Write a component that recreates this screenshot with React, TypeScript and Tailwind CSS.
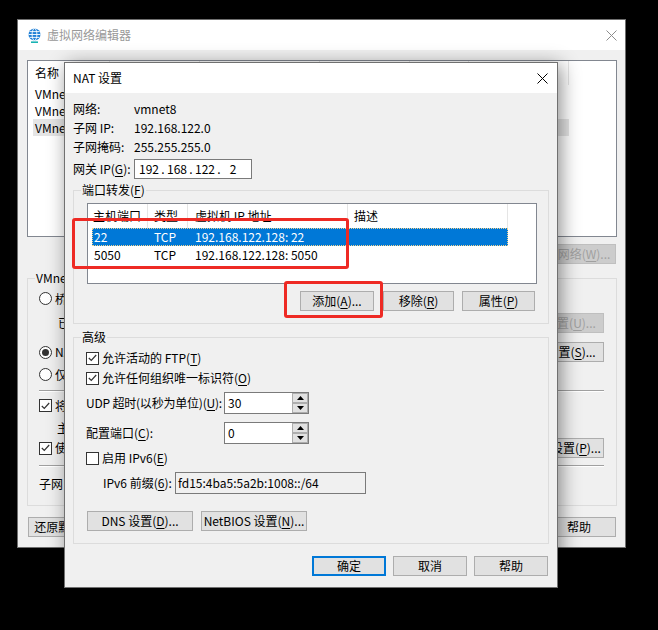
import React from 'react';

type Kids = { children?: React.ReactNode };
type Kind = 'normal' | 'primary' | 'disabled';

// access-key letter, underlined like in Win32 dialogs
function Key({ k }: { k: string }) {
  return <span className="underline decoration-1 underline-offset-2">{k}</span>;
}

function Btn({ children, className = '', kind = 'normal' }: Kids & { className?: string; kind?: Kind }) {
  const tone =
    kind === 'primary'
      ? 'border-2 border-[#0078d7] bg-[#e1e1e1] text-black'
      : kind === 'disabled'
        ? 'border border-[#bfbfbf] bg-[#cccccc] text-[#a0a0a0]'
        : 'border border-[#adadad] bg-[#e1e1e1] text-black';
  return (
    <div className={`flex h-[20px] shrink-0 items-center justify-center whitespace-nowrap leading-[14px] ${tone} ${className}`}>
      {children}
    </div>
  );
}

function Check({ on }: { on: boolean }) {
  return (
    <span className="flex h-[13px] w-[13px] shrink-0 items-center justify-center border border-[#333333] bg-white">
      {on && (
        <svg width="9" height="8" viewBox="0 0 9 8">
          <path d="M0.8 4 L3.3 6.5 L8.2 1" fill="none" stroke="#333333" strokeWidth="1.2" />
        </svg>
      )}
    </span>
  );
}

function Radio({ on }: { on: boolean }) {
  return (
    <span className="flex h-[13px] w-[13px] shrink-0 items-center justify-center rounded-full border border-[#333333] bg-white">
      {on && <span className="h-[7px] w-[7px] rounded-full bg-[#333333]" />}
    </span>
  );
}

function Spin({ value }: { value: string }) {
  return (
    <div className="flex h-[22px] w-[85px] shrink-0 border border-[#7a7a7a] bg-white">
      <div className="flex flex-1 items-center pl-[3px] leading-[14px]">{value}</div>
      <div className="flex w-[16px] flex-col">
        <div className="flex h-[10px] items-center justify-center border border-[#adadad] bg-[#e1e1e1]">
          <svg width="7" height="4" viewBox="0 0 7 4"><path d="M0 4 L3.5 0 L7 4 Z" fill="#000" /></svg>
        </div>
        <div className="flex h-[10px] items-center justify-center border border-[#adadad] bg-[#e1e1e1]">
          <svg width="7" height="4" viewBox="0 0 7 4"><path d="M0 0 L3.5 4 L7 0 Z" fill="#000" /></svg>
        </div>
      </div>
    </div>
  );
}

function Group({ label, className = '', children }: Kids & { label: React.ReactNode; className?: string }) {
  return (
    <div className={`relative border border-[#dcdcdc] ${className}`}>
      <span className="absolute -top-[8px] left-[7px] bg-[#f0f0f0] px-[1px] leading-[14px] whitespace-nowrap">{label}</span>
      {children}
    </div>
  );
}

function Separator() {
  return (
    <div className="flex flex-col">
      <div className="h-px bg-[#a0a0a0]" />
      <div className="h-px bg-white" />
    </div>
  );
}

function CloseX({ color, size }: { color: string; size: number }) {
  return (
    <svg width={size} height={size} viewBox={`0 0 ${size} ${size}`} className="shrink-0">
      <path d={`M0.5 0.5 L${size - 0.5} ${size - 0.5} M${size - 0.5} 0.5 L0.5 ${size - 0.5}`} stroke={color} strokeWidth="1" />
    </svg>
  );
}

function Globe() {
  return (
    <svg width="13" height="15" viewBox="0 0 13 15" className="shrink-0">
      <circle cx="6.5" cy="6.5" r="6" fill="#1e7fd6" />
      <ellipse cx="6.5" cy="6.5" rx="2.4" ry="6" fill="none" stroke="#ffffff" strokeWidth="0.9" />
      <path d="M0.5 6.5 H12.5 M1.6 3.6 H11.4 M1.6 9.4 H11.4" stroke="#ffffff" strokeWidth="0.9" />
      <rect x="3" y="13.4" width="7" height="1.6" fill="#19b3b3" />
    </svg>
  );
}

const backCols = [82, 90, 120, 90, 59, 100];
const backHead = ['名称', '类型', '外部连接', '主机连接', 'DHCP', '子网地址'];
const backRows = [
  ['VMnet0', '桥接模式', '自动桥接', '-', '-', '-'],
  ['VMnet1', '仅主机...', '-', '已连接', '已启用', '192.168.137.0'],
  ['VMnet8', 'NAT 模式', 'NAT 模式', '已连接', '已启用', '192.168.122.0'],
];

function BackWindow() {
  return (
    <div className="absolute left-[17px] top-[19px] flex h-[529px] w-[609px] flex-col border border-[#6f6f6f] bg-[#f0f0f0]">
      <div className="flex h-[30px] shrink-0 items-center bg-white pl-[10px] pr-[8px]">
        <Globe />
        <span className="ml-[6px] leading-[16px] whitespace-nowrap text-[#999999]">虚拟网络编辑器</span>
        <div className="ml-auto"><CloseX color="#8c8c8c" size={11} /></div>
      </div>

      <div className="flex flex-1 flex-col pl-[9px] pr-[8px] pt-[10px]">
        {/* network list */}
        <div className="flex h-[177px] flex-col border border-[#828790] bg-white">
          <div className="flex h-[24px] shrink-0">
            {backHead.map((h, i) => (
              <div key={h} style={{ width: backCols[i] }} className="flex items-center border-r border-[#e5e5e5] pl-[7px] whitespace-nowrap leading-[14px]">
                {h}
              </div>
            ))}
          </div>
          {backRows.map((r, ri) => (
            <div key={r[0]} className={`ml-[5px] flex h-[17px] w-[536px] items-center leading-[14px] ${ri === 2 ? 'bg-[#e5e5e5]' : ''}`}>
              {r.map((c, i) => (
                <div key={i} style={{ width: i === 0 ? backCols[0] - 5 : backCols[i] }} className="pl-[2px] whitespace-nowrap">
                  {c}
                </div>
              ))}
            </div>
          ))}
        </div>

        <div className="mt-[7px] mr-[1px] flex justify-end gap-[8px]">
          <Btn className="w-[100px]">添加网络(<Key k="E" />)...</Btn>
          <Btn className="w-[100px]">移除网络(<Key k="O" />)</Btn>
          <Btn kind="disabled" className="w-[100px]">重命名网络(<Key k="W" />)...</Btn>
        </div>

        <Group label="VMnet 信息" className="mt-[14px] h-[228px]">
          <div className="flex flex-col pl-[11px] pr-[12px] pt-[10px] leading-[14px] whitespace-nowrap">
            <div className="flex h-[19px] items-center">
              <Radio on={false} />
              <span className="ml-[3px]">桥接模式(将虚拟机直接连接到外部网络)(<Key k="B" />)</span>
            </div>
            <div className="mt-[5px] flex h-[20px] items-center">
              <span className="ml-[19px]">已桥接至(<Key k="G" />):</span>
              <div className="ml-[8px] h-[20px] w-[300px] border border-[#cccccc] bg-[#f0f0f0]" />
              <Btn kind="disabled" className="ml-auto w-[91px]">自动设置(<Key k="U" />)...</Btn>
            </div>
            <div className="mt-[9px] flex h-[20px] items-center">
              <Radio on />
              <span className="ml-[3px]">NAT 模式(与虚拟机共享主机的 IP 地址)(<Key k="N" />)</span>
              <Btn className="ml-auto w-[91px]">NAT 设置(<Key k="S" />)...</Btn>
            </div>
            <div className="mt-[3px] flex h-[19px] items-center">
              <Radio on={false} />
              <span className="ml-[3px]">仅主机模式(在专用网络内连接虚拟机)(<Key k="H" />)</span>
            </div>
            <div className="mt-[6px]"><Separator /></div>
            <div className="mt-[4px] flex h-[19px] items-center">
              <Check on />
              <span className="ml-[3px]">将主机虚拟适配器连接到此网络(<Key k="V" />)</span>
            </div>
            <div className="mt-[3px] flex h-[19px] items-center pl-[18px]">主机虚拟适配器名称: VMware 网络适配器 VMnet8</div>
            <div className="mt-[1px] flex h-[20px] items-center">
              <Check on />
              <span className="ml-[3px]">使用本地 DHCP 服务将 IP 地址分配给虚拟机(<Key k="D" />)</span>
              <Btn className="ml-auto w-[91px]">DHCP 设置(<Key k="P" />)...</Btn>
            </div>
            <div className="mt-[7px]"><Separator /></div>
            <div className="mt-[7px] flex h-[19px] items-center">
              <span>子网 IP (<Key k="I" />):</span>
              <span className="ml-[10px]">192 . 168 . 122 . 0</span>
              <span className="ml-[30px]">子网掩码(<Key k="M" />):</span>
              <span className="ml-[10px]">255 . 255 . 255 . 0</span>
            </div>
          </div>
        </Group>

        <div className="mt-[11px] flex h-[20px]">
          <Btn className="ml-[1px] w-[100px]">还原默认设置(<Key k="R" />)</Btn>
          <div className="ml-auto mr-[1px] flex gap-[7px]">
            <Btn className="w-[74px]">确定</Btn>
            <Btn className="w-[74px]">取消</Btn>
            <Btn className="w-[74px]">应用(<Key k="A" />)</Btn>
            <Btn className="w-[74px]">帮助</Btn>
          </div>
        </div>
      </div>
    </div>
  );
}

const forwards = [
  { port: '22', type: 'TCP', addr: '192.168.122.128: 22', selected: true },
  { port: '5050', type: 'TCP', addr: '192.168.122.128: 5050', selected: false },
];

function IpField() {
  const parts = ['192', '168', '122', '2'];
  return (
    <div className="flex h-[20px] w-[118px] items-center border border-[#7a7a7a] bg-white pl-[3px] leading-[14px]">
      {parts.map((p, i) => (
        <React.Fragment key={i}>
          <span className="w-[22px] text-center">{p}</span>
          {i < 3 && <span className="w-[6px] text-center">.</span>}
        </React.Fragment>
      ))}
    </div>
  );
}

function NatDialog() {
  return (
    <div className="absolute left-[64px] top-[62px] flex h-[526px] w-[494px] flex-col border border-[#707070] bg-[#f0f0f0] shadow-[3px_3px_18px_rgba(0,0,0,0.45)]">
      <div className="flex h-[30px] shrink-0 items-center bg-white pl-[8px] pr-[9px]">
        <span className="leading-[16px] whitespace-nowrap">NAT 设置</span>
        <div className="ml-auto"><CloseX color="#000000" size={11} /></div>
      </div>

      <div className="flex flex-col pl-[8px] pt-[6px] leading-[14px] whitespace-nowrap">
        {[
          ['网络:', 'vmnet8'],
          ['子网 IP:', '192.168.122.0'],
          ['子网掩码:', '255.255.255.0'],
        ].map(([k, v]) => (
          <div key={k} className="flex h-[19px] items-center">
            <span className="w-[61px] shrink-0">{k}</span>
            <span>{v}</span>
          </div>
        ))}
        <div className="mt-[3px] flex h-[20px] items-center">
          <span className="w-[61px] shrink-0">网关 IP(<Key k="G" />):</span>
          <IpField />
        </div>

        {/* port forwarding */}
        <Group label={<>端口转发(<Key k="F" />)</>} className="mt-[11px] h-[134px] w-[476px]">
          <div className="flex flex-col pl-[13px] pt-[12px]">
            <div className="flex h-[81px] w-[450px] flex-col border border-[#828790] bg-white">
              <div className="flex h-[24px] shrink-0">
                <div className="flex w-[60px] items-center border-r border-[#e5e5e5] pl-[5px]">主机端口</div>
                <div className="flex w-[40px] items-center border-r border-[#e5e5e5] pl-[6px]">类型</div>
                <div className="flex w-[160px] items-center border-r border-[#e5e5e5] pl-[7px]">虚拟机 IP 地址</div>
                <div className="flex w-[160px] items-center border-r border-[#e5e5e5] pl-[6px]">描述</div>
              </div>
              {forwards.map((f) => (
                <div
                  key={f.port}
                  className={`ml-[4px] flex h-[18px] w-[416px] items-center ${f.selected ? 'bg-[#0078d7] text-white outline-1 -outline-offset-1 outline-dotted outline-[#f3d38f]' : ''}`}
                >
                  <span className="w-[56px] pl-[2px]">{f.port}</span>
                  <span className="w-[40px] pl-[6px]">{f.type}</span>
                  <span className="w-[160px] pl-[7px]">{f.addr}</span>
                </div>
              ))}
            </div>
            <div className="mt-[7px] flex">
              <Btn className="ml-[213px] w-[74px]">添加(<Key k="A" />)...</Btn>
              <Btn className="ml-[9px] w-[71px]">移除(<Key k="R" />)</Btn>
              <Btn className="ml-[8px] w-[73px]">属性(<Key k="P" />)</Btn>
            </div>
          </div>
        </Group>

        {/* advanced */}
        <Group label="高级" className="mt-[13px] h-[207px] w-[476px]">
          <div className="flex flex-col pl-[12px] pt-[10px]">
            <div className="flex h-[20px] items-center">
              <Check on />
              <span className="ml-[3px]">允许活动的 FTP(<Key k="T" />)</span>
            </div>
            <div className="flex h-[20px] items-center">
              <Check on />
              <span className="ml-[3px]">允许任何组织唯一标识符(<Key k="O" />)</span>
            </div>
            <div className="mt-[4px] flex h-[22px] items-center">
              <span className="w-[138px] shrink-0 tracking-[-0.2px]">UDP 超时(以秒为单位)(<Key k="U" />):</span>
              <Spin value="30" />
            </div>
            <div className="mt-[8px] flex h-[22px] items-center">
              <span className="w-[138px] shrink-0">配置端口(<Key k="C" />):</span>
              <Spin value="0" />
            </div>
            <div className="mt-[4px] flex h-[20px] items-center">
              <Check on={false} />
              <span className="ml-[3px]">启用 IPv6(<Key k="E" />)</span>
            </div>
            <div className="mt-[4px] flex h-[22px] items-center">
              <span className="ml-[17px] w-[72px] shrink-0">IPv6 前缀(<Key k="6" />):</span>
              <div className="flex h-[22px] w-[191px] items-center border border-[#7a7a7a] bg-[#f0f0f0] pl-[2px]">
                fd15:4ba5:5a2b:1008::/64
              </div>
            </div>
            <div className="mt-[17px] ml-[1px] flex gap-[8px]">
              <Btn className="w-[106px]">DNS 设置(<Key k="D" />)...</Btn>
              <Btn className="w-[106px]">NetBIOS 设置(<Key k="N" />)...</Btn>
            </div>
          </div>
        </Group>

        <div className="mt-[12px] flex justify-end gap-[7px] pr-[9px]">
          <Btn kind="primary" className="w-[74px]">确定</Btn>
          <Btn className="w-[74px]">取消</Btn>
          <Btn className="w-[74px]">帮助</Btn>
        </div>
      </div>
    </div>
  );
}

export default function App() {
  return (
    <div className="relative h-[630px] w-[658px] overflow-hidden bg-black font-['Noto_Sans_CJK_SC','Noto_Sans',sans-serif] text-[12px] text-black">
      <BackWindow />
      <NatDialog />
      {/* red annotation boxes drawn over the screenshot */}
      <div className="absolute left-[72px] top-[218px] h-[51px] w-[277px] rounded-[3px] border-[3px] border-[#ee2a24]" />
      <div className="absolute left-[284px] top-[281px] h-[37px] w-[99px] rounded-[3px] border-[3px] border-[#ee2a24]" />
    </div>
  );
}
